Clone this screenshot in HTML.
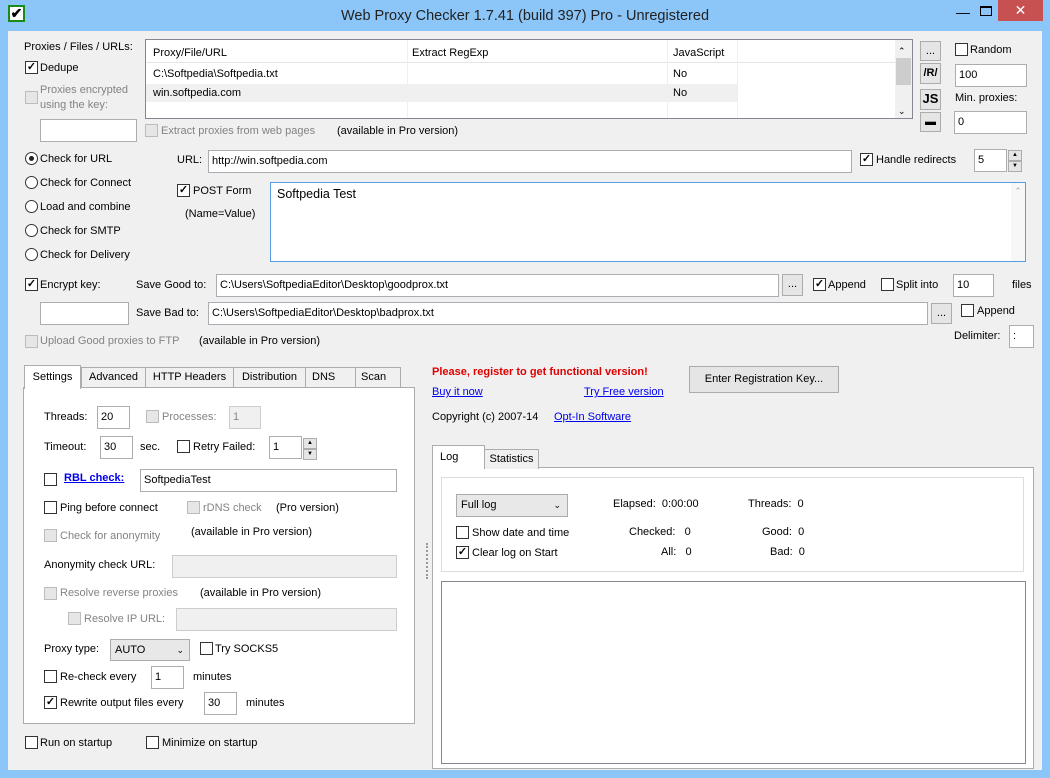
<!DOCTYPE html>
<html><head><meta charset="utf-8"><style>
*{box-sizing:border-box;margin:0;padding:0}
body{width:1050px;height:778px;overflow:hidden;background:#8cc6f8;font:11px "Liberation Sans",sans-serif;color:#000;position:relative}
.a{position:absolute;white-space:nowrap;line-height:16px}
.cl{position:absolute;left:8px;top:31px;width:1034px;height:739px;background:#f0f0f0}
.tb{position:absolute;background:#fff;border:1px solid #abadb3;height:23px;padding:3px 3px;line-height:15px;white-space:nowrap;overflow:hidden}
.dtb{background:#f0f0f0;border-color:#ccc;color:#888}
.cb{position:absolute;width:13px;height:13px;border:1px solid #333;background:#fff;font-size:11px;line-height:11px;text-align:center;font-weight:bold}
.cb.d{border-color:#bcbcbc;background:#e6e6e6}
.rb{position:absolute;width:13px;height:13px;border:1px solid #333;border-radius:50%;background:#fff}
.g{color:#838383}
.btn{position:absolute;border:1px solid #acacac;background:#e5e5e5;text-align:center;line-height:18px}
.lnk{color:#0000ee;text-decoration:underline}
.tab{position:absolute;border:1px solid #acacac;border-bottom:none;background:#f0f0f0;text-align:center;line-height:18px;height:20px}
</style></head><body>
<div class="a" style="left:8px;top:5px;width:17px;height:17px;border:2px solid #1b8b1b;background:#fff;font-weight:bold;font-size:14px;line-height:13px;text-align:center">✔</div>
<div class="a" style="left:0;width:1050px;top:6px;text-align:center;font-size:14.5px;line-height:20px;color:#222">Web Proxy Checker 1.7.41 (build 397) Pro - Unregistered</div>
<div class="a" style="left:956px;top:4px;font-size:14px">&#8212;</div>
<div class="a" style="left:980px;top:6px;width:12px;height:10px;border:1px solid #000;border-top-width:2px"></div>
<div class="a" style="left:998px;top:0;width:45px;height:21px;background:#c75050;color:#fff;text-align:center;font-size:14px;line-height:20px">✕</div>
<div class="cl"></div>

<div class="a" style="left:24px;top:39px">Proxies / Files / URLs:</div>
<div class="cb" style="left:25px;top:61px">✓</div><div class="a" style="left:40px;top:60px">Dedupe</div>
<div class="cb d" style="left:25px;top:91px"></div><div class="a g" style="left:40px;top:83px;line-height:15px">Proxies encrypted<br>using the key:</div>
<div class="tb" style="left:40px;top:119px;width:97px"></div>
<div class="cb d" style="left:145px;top:124px"></div><div class="a g" style="left:161px;top:123px">Extract proxies from web pages</div>
<div class="a" style="left:337px;top:123px">(available in Pro version)</div>

<div class="a" style="left:145px;top:39px;width:768px;height:80px;background:#fff;border:1px solid #828790"></div>
<div class="a" style="left:146px;top:40px;width:749px;height:23px;border-bottom:1px solid #e5e5e5"></div>
<div class="a" style="left:146px;top:84px;width:591px;height:18px;background:#f0f0f0"></div>
<div class="a" style="left:407px;top:40px;width:1px;height:78px;background:#eaf0f8"></div>
<div class="a" style="left:667px;top:40px;width:1px;height:78px;background:#eaf0f8"></div>
<div class="a" style="left:737px;top:40px;width:1px;height:78px;background:#eaf0f8"></div>
<div class="a" style="left:153px;top:45px">Proxy/File/URL</div><div class="a" style="left:412px;top:45px">Extract RegExp</div><div class="a" style="left:673px;top:45px">JavaScript</div>
<div class="a" style="left:153px;top:66px">C:\Softpedia\Softpedia.txt</div><div class="a" style="left:673px;top:66px">No</div>
<div class="a" style="left:153px;top:85px">win.softpedia.com</div><div class="a" style="left:673px;top:85px">No</div>
<div class="a" style="left:895px;top:40px;width:17px;height:78px;background:#f0f0f0"></div>
<div class="a" style="left:896px;top:58px;width:15px;height:27px;background:#cdcdcd"></div>
<div class="a" style="left:898px;top:43px;font-size:9px">&#8963;</div><div class="a" style="left:898px;top:103px;font-size:9px">&#8964;</div>

<div class="btn" style="left:920px;top:41px;width:21px;height:20px">...</div>
<div class="btn" style="left:920px;top:63px;width:21px;height:21px;font-weight:bold;font-size:11px">/R/</div>
<div class="btn" style="left:920px;top:89px;width:21px;height:21px;font-weight:bold;font-size:13px">JS</div>
<div class="btn" style="left:920px;top:112px;width:21px;height:20px;font-weight:bold">&#9644;</div>
<div class="cb" style="left:955px;top:43px"></div><div class="a" style="left:970px;top:42px">Random</div>
<div class="tb" style="left:955px;top:64px;width:72px">100</div>
<div class="a" style="left:955px;top:90px">Min. proxies:</div>
<div class="tb" style="left:954px;top:111px;width:73px">0</div>

<div class="rb" style="left:25px;top:152px"><div style="position:absolute;left:3px;top:3px;width:5px;height:5px;border-radius:50%;background:#222"></div></div><div class="a" style="left:40px;top:151px">Check for URL</div>
<div class="rb" style="left:25px;top:176px"></div><div class="a" style="left:40px;top:175px">Check for Connect</div>
<div class="rb" style="left:25px;top:200px"></div><div class="a" style="left:40px;top:199px">Load and combine</div>
<div class="rb" style="left:25px;top:224px"></div><div class="a" style="left:40px;top:223px">Check for SMTP</div>
<div class="rb" style="left:25px;top:248px"></div><div class="a" style="left:40px;top:247px">Check for Delivery</div>

<div class="a" style="left:177px;top:152px">URL:</div>
<div class="tb" style="left:208px;top:150px;width:644px">http://win.softpedia.com</div>
<div class="cb" style="left:860px;top:153px">✓</div><div class="a" style="left:876px;top:152px">Handle redirects</div>
<div class="tb" style="left:974px;top:149px;width:33px">5</div>
<div class="btn" style="left:1008px;top:150px;width:14px;height:11px;font-size:6px;line-height:9px">▲</div>
<div class="btn" style="left:1008px;top:161px;width:14px;height:11px;font-size:6px;line-height:9px">▼</div>
<div class="cb" style="left:177px;top:184px">✓</div><div class="a" style="left:193px;top:183px">POST Form</div>
<div class="a" style="left:185px;top:206px">(Name=Value)</div>
<div class="a" style="left:270px;top:182px;width:756px;height:80px;background:#fff;border:1px solid #569de5"></div>
<div class="a" style="left:277px;top:186px;font-size:12.5px">Softpedia Test</div>
<div class="a" style="left:1011px;top:183px;width:14px;height:78px;background:#f7f7f7;color:#aaa;font-size:9px;text-align:center">&#8963;</div>

<div class="cb" style="left:25px;top:278px">✓</div><div class="a" style="left:40px;top:277px">Encrypt key:</div>
<div class="a" style="left:136px;top:277px">Save Good to:</div>
<div class="tb" style="left:216px;top:274px;width:563px">C:\Users\SoftpediaEditor\Desktop\goodprox.txt</div>
<div class="btn" style="left:782px;top:274px;width:21px;height:22px">...</div>
<div class="cb" style="left:813px;top:278px">✓</div><div class="a" style="left:828px;top:277px">Append</div>
<div class="cb" style="left:881px;top:278px"></div><div class="a" style="left:896px;top:277px">Split into</div>
<div class="tb" style="left:953px;top:274px;width:41px">10</div>
<div class="a" style="left:1012px;top:277px">files</div>
<div class="tb" style="left:40px;top:302px;width:89px"></div>
<div class="a" style="left:136px;top:305px">Save Bad to:</div>
<div class="tb" style="left:208px;top:302px;width:720px">C:\Users\SoftpediaEditor\Desktop\badprox.txt</div>
<div class="btn" style="left:931px;top:303px;width:21px;height:21px">...</div>
<div class="cb" style="left:961px;top:304px"></div><div class="a" style="left:977px;top:303px">Append</div>
<div class="a" style="left:954px;top:328px">Delimiter:</div>
<div class="tb" style="left:1009px;top:325px;width:25px">:</div>
<div class="cb d" style="left:25px;top:335px"></div><div class="a g" style="left:40px;top:333px">Upload Good proxies to FTP</div>
<div class="a" style="left:199px;top:333px">(available in Pro version)</div>

<!-- left tabs -->
<div class="a" style="left:23px;top:387px;width:392px;height:337px;background:#fff;border:1px solid #acacac"></div>
<div class="tab" style="left:81px;top:367px;width:65px">Advanced</div>
<div class="tab" style="left:145px;top:367px;width:89px">HTTP Headers</div>
<div class="tab" style="left:233px;top:367px;width:73px">Distribution</div>
<div class="tab" style="left:305px;top:367px;width:51px;text-align:left;padding-left:6px">DNS</div>
<div class="tab" style="left:355px;top:367px;width:46px;text-align:left;padding-left:5px">Scan</div>
<div class="tab" style="left:24px;top:365px;width:57px;height:24px;background:#fff;line-height:22px">Settings</div>

<div class="a" style="left:44px;top:409px">Threads:</div><div class="tb" style="left:97px;top:406px;width:33px">20</div>
<div class="cb d" style="left:146px;top:410px"></div><div class="a g" style="left:162px;top:409px">Processes:</div><div class="tb dtb" style="left:229px;top:406px;width:32px">1</div>
<div class="a" style="left:44px;top:439px">Timeout:</div><div class="tb" style="left:100px;top:436px;width:33px">30</div><div class="a" style="left:140px;top:439px">sec.</div>
<div class="cb" style="left:177px;top:440px"></div><div class="a" style="left:193px;top:439px">Retry Failed:</div>
<div class="tb" style="left:269px;top:436px;width:33px">1</div>
<div class="btn" style="left:303px;top:438px;width:14px;height:11px;font-size:6px;line-height:9px">▲</div>
<div class="btn" style="left:303px;top:449px;width:14px;height:11px;font-size:6px;line-height:9px">▼</div>
<div class="cb" style="left:44px;top:473px"></div><div class="a lnk" style="left:64px;top:470px;font-weight:bold">RBL check:</div>
<div class="tb" style="left:140px;top:469px;width:257px">SoftpediaTest</div>
<div class="cb" style="left:44px;top:501px"></div><div class="a" style="left:60px;top:500px">Ping before connect</div>
<div class="cb d" style="left:187px;top:501px"></div><div class="a g" style="left:203px;top:500px">rDNS check</div><div class="a" style="left:276px;top:500px">(Pro version)</div>
<div class="cb d" style="left:44px;top:529px"></div><div class="a g" style="left:60px;top:528px">Check for anonymity</div><div class="a" style="left:191px;top:524px">(available in Pro version)</div>
<div class="a" style="left:44px;top:557px">Anonymity check URL:</div><div class="tb dtb" style="left:172px;top:555px;width:225px"></div>
<div class="cb d" style="left:44px;top:587px"></div><div class="a g" style="left:60px;top:585px">Resolve reverse proxies</div><div class="a" style="left:200px;top:585px">(available in Pro version)</div>
<div class="cb d" style="left:68px;top:612px"></div><div class="a g" style="left:84px;top:611px">Resolve IP URL:</div><div class="tb dtb" style="left:176px;top:608px;width:221px"></div>
<div class="a" style="left:44px;top:641px">Proxy type:</div>
<div class="a" style="left:110px;top:639px;width:80px;height:22px;border:1px solid #acacac;background:#e8e8e8;padding:3px 4px;line-height:14px">AUTO<span style="position:absolute;right:5px;font-size:9px">&#8964;</span></div>
<div class="cb" style="left:200px;top:642px"></div><div class="a" style="left:215px;top:641px">Try SOCKS5</div>
<div class="cb" style="left:44px;top:670px"></div><div class="a" style="left:60px;top:669px">Re-check every</div><div class="tb" style="left:151px;top:666px;width:33px">1</div><div class="a" style="left:193px;top:669px">minutes</div>
<div class="cb" style="left:44px;top:696px">✓</div><div class="a" style="left:60px;top:695px">Rewrite output files every</div><div class="tb" style="left:204px;top:692px;width:33px">30</div><div class="a" style="left:246px;top:695px">minutes</div>
<div class="cb" style="left:25px;top:736px"></div><div class="a" style="left:40px;top:735px">Run on startup</div>
<div class="cb" style="left:146px;top:736px"></div><div class="a" style="left:162px;top:735px">Minimize on startup</div>

<!-- right -->
<div class="a" style="left:432px;top:364px;color:#e00000;font-weight:bold">Please, register to get functional version!</div>
<div class="a lnk" style="left:432px;top:384px;font-size:11px">Buy it now</div>
<div class="a lnk" style="left:584px;top:384px;font-size:11px">Try Free version</div>
<div class="btn" style="left:689px;top:366px;width:150px;height:27px;line-height:25px">Enter Registration Key...</div>
<div class="a" style="left:432px;top:409px">Copyright (c) 2007-14</div><div class="a lnk" style="left:554px;top:409px;font-size:11px">Opt-In Software</div>
<div class="a" style="left:426px;top:543px;width:2px;height:36px;border-left:2px dotted #999"></div>

<div class="a" style="left:432px;top:467px;width:602px;height:302px;background:#fff;border:1px solid #acacac"></div>
<div class="tab" style="left:484px;top:449px;width:55px">Statistics</div>
<div class="tab" style="left:432px;top:445px;width:53px;height:24px;background:#fff;line-height:22px;text-align:left;padding-left:7px">Log</div>
<div class="a" style="left:441px;top:477px;width:583px;height:95px;border:1px solid #dcdcdc"></div>
<div class="a" style="left:456px;top:494px;width:112px;height:23px;border:1px solid #acacac;background:#e8e8e8;padding:3px 4px;line-height:15px">Full log<span style="position:absolute;right:6px;font-size:9px">&#8964;</span></div>
<div class="a" style="left:613px;top:496px">Elapsed:&nbsp; 0:00:00</div>
<div class="a" style="left:748px;top:496px">Threads:&nbsp; 0</div>
<div class="cb" style="left:456px;top:526px"></div><div class="a" style="left:472px;top:525px">Show date and time</div>
<div class="a" style="left:629px;top:524px">Checked:&nbsp;&nbsp; 0</div>
<div class="a" style="left:762px;top:524px">Good:&nbsp; 0</div>
<div class="cb" style="left:456px;top:546px">✓</div><div class="a" style="left:472px;top:545px">Clear log on Start</div>
<div class="a" style="left:661px;top:544px">All:&nbsp;&nbsp; 0</div>
<div class="a" style="left:770px;top:544px">Bad:&nbsp; 0</div>
<div class="a" style="left:441px;top:581px;width:585px;height:183px;border:1px solid #828790;background:#fff"></div>
</body></html>
